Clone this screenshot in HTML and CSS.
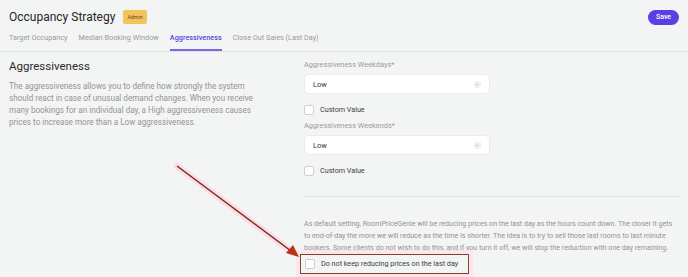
FILE: index.html
```html
<!DOCTYPE html>
<html>
<head>
  <meta charset="UTF-8">
  <title>Occupancy Strategy</title>
  <link rel="stylesheet" href="styles.css">
</head>
<body>
  <div class="topbar">
    <div class="title-group">
      <h1 class="title">Occupancy Strategy</h1>
      <span class="badge">Admin</span>
    </div>
    <button class="save-button">Save</button>
  </div>

  <div class="tabs">
    <span class="tab">Target Occupancy</span>
    <span class="tab">Median Booking Window</span>
    <span class="tab active">Aggressiveness</span>
    <span class="tab">Close Out Sales (Last Day)</span>
  </div>

  <div class="section">
    <div class="intro">
      <h2 class="heading">Aggressiveness</h2>
      <p class="intro-text">The aggressiveness allows you to define how strongly the system should react in case of unusual demand changes. When you receive many bookings for an individual day, a High aggressiveness causes prices to increase more than a Low aggressiveness.</p>
    </div>

    <div class="form">
      <label class="field-label">Aggressiveness Weekdays*</label>
      <div class="select">
        <span>Low</span>
        <span class="chevron"></span>
      </div>
      <div class="check-row">
        <span class="checkbox"></span>
        <span>Custom Value</span>
      </div>

      <label class="field-label second">Aggressiveness Weekends*</label>
      <div class="select">
        <span>Low</span>
        <span class="chevron"></span>
      </div>
      <div class="check-row">
        <span class="checkbox"></span>
        <span>Custom Value</span>
      </div>

      <hr class="divider">

      <p class="note">As default setting, RoomPriceGenie will be reducing prices on the last day as the hours count down. The closer it gets to end-of-day the more we will reduce as the time is shorter. The idea is to try to sell those last rooms to last minute bookers. Some clients do not wish to do this, and if you turn it off, we will stop the reduction with one day remaining.</p>

      <div class="check-row highlight">
        <span class="checkbox"></span>
        <span>Do not keep reducing prices on the last day</span>
      </div>
    </div>
  </div>

  <svg class="annotation" width="688" height="277" viewBox="0 0 688 277">
    <line x1="177" y1="166" x2="292" y2="252" stroke="#ffdbe9" stroke-width="7" stroke-linecap="round"/>
    <line x1="177" y1="166" x2="291" y2="251" stroke="#6a3512" stroke-width="1.5"/>
    <polygon points="299,257 286,253 293,245" fill="#b8321c"/>
  </svg>
</body>
</html>
```

FILE: styles.css
```css
body {
  margin: 0;
  width: 688px;
  height: 277px;
  overflow: hidden;
  position: relative;
  background: #f3f4f4;
  font-family: Roboto, 'Liberation Sans', sans-serif;
  color: #2b2b2b;
}

.topbar {
  display: flex;
  align-items: center;
  justify-content: space-between;
  padding: 8px 9px 0 9px;
  height: 18px;
}

.title-group {
  display: flex;
  align-items: center;
  gap: 8px;
}

.title {
  margin: 0;
  font-size: 12px;
  font-weight: 400;
  line-height: 18px;
  color: #262626;
}

.badge {
  background: #f2c45e;
  color: #6a4a10;
  font-size: 5.3px;
  padding: 0 4px;
  height: 14px;
  line-height: 14px;
  border-radius: 2px;
}

.save-button {
  background: #5a3fe4;
  color: white;
  border: none;
  border-radius: 8px;
  font-family: inherit;
  font-size: 7px;
  font-weight: 500;
  width: 31px;
  height: 15px;
  padding: 0;
}

.tabs {
  display: flex;
  gap: 11px;
  margin-top: 7px;
  padding: 0 9px;
  height: 18px;
  border-bottom: 1px solid #e3e4e5;
}

.tab {
  font-size: 7.3px;
  line-height: 10px;
  color: #9a9a9a;
}

.tab.active {
  color: #5a45d6;
  font-weight: 500;
  height: 16px;
  border-bottom: 2px solid #7b68e0;
}

.section {
  display: grid;
  grid-template-columns: 295px 1fr;
  padding: 6px 8px 0 9px;
}

.heading {
  margin: 0;
  font-size: 11.5px;
  font-weight: 400;
  line-height: 17px;
  color: #2b2b2b;
}

.intro-text {
  margin: 5px 0 0;
  font-size: 8.15px;
  line-height: 12px;
  color: #939393;
  width: 252px;
}

.form {
  display: flex;
  flex-direction: column;
  align-items: flex-start;
  padding-top: 2px;
}

.field-label {
  font-size: 7.4px;
  line-height: 10px;
  color: #9b9b9b;
  margin-bottom: 4px;
}

.field-label.second {
  margin-top: 6px;
}

.select {
  box-sizing: border-box;
  width: 186px;
  height: 20px;
  background: white;
  border: 1px solid #ebebeb;
  border-radius: 5px;
  display: flex;
  align-items: center;
  justify-content: space-between;
  padding: 0 8px;
  font-size: 7.5px;
  color: #333;
}

.chevron {
  position: relative;
  width: 7px;
  height: 7px;
  border-radius: 50%;
  background: #efefef;
}

.chevron:after {
  content: "";
  position: absolute;
  left: 2px;
  top: 3px;
  border-left: 1.5px solid transparent;
  border-right: 1.5px solid transparent;
  border-top: 1.5px solid #999;
}

.check-row {
  display: flex;
  align-items: center;
  gap: 6px;
  margin-top: 11px;
  font-size: 7.2px;
  line-height: 10px;
  color: #3d3d3d;
}

.checkbox {
  box-sizing: border-box;
  width: 10px;
  height: 10px;
  border: 1px solid #cfcfcf;
  border-radius: 2px;
  background: white;
}

.divider {
  align-self: stretch;
  border: none;
  border-top: 1px solid #e2e3e4;
  margin: 20px 0 0;
}

.note {
  margin: 21px 0 0;
  font-size: 7.1px;
  line-height: 12px;
  color: #939393;
}

.check-row.highlight {
  margin: 0 0 0 -4px;
  padding: 4px 10px 4px 4px;
  border: 1.5px solid #7a4a1e;
  box-shadow: 0 0 0 4px #ffe4ef;
}

.annotation {
  position: absolute;
  left: 0;
  top: 0;
  pointer-events: none;
}
```
